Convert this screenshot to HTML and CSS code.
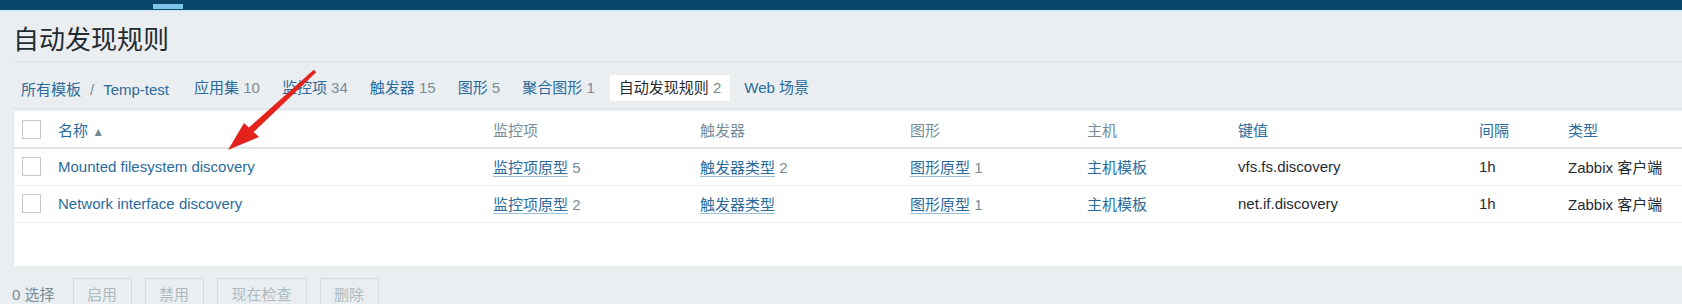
FILE: index.html
```html
<!DOCTYPE html>
<html lang="zh-CN">
<head>
<meta charset="utf-8">
<title>自动发现规则</title>
<link rel="stylesheet" href="styles.css">
</head>
<body>
<div class="topbar"><span class="topbar-tab"></span></div>
<div class="page">
  <header class="header">
    <h1 class="title">自动发现规则</h1>
  </header>
  <nav class="tabs">
    <span class="crumb"><a class="link">所有模板</a><span class="sep">/</span><a class="link">Temp-test</a></span>
    <span class="tab"><a class="link">应用集</a> <span class="count">10</span></span>
    <span class="tab"><a class="link">监控项</a> <span class="count">34</span></span>
    <span class="tab"><a class="link">触发器</a> <span class="count">15</span></span>
    <span class="tab"><a class="link">图形</a> <span class="count">5</span></span>
    <span class="tab"><a class="link">聚合图形</a> <span class="count">1</span></span>
    <span class="tab tab-active"><span class="current">自动发现规则</span> <span class="count">2</span></span>
    <span class="tab"><a class="link">Web 场景</a></span>
  </nav>
  <section class="list">
    <table class="grid">
      <colgroup>
        <col class="c-check"><col class="c-name"><col class="c-items"><col class="c-trig"><col class="c-graph"><col class="c-host"><col class="c-key"><col class="c-int"><col class="c-type">
      </colgroup>
      <thead>
        <tr>
          <th><span class="box"></span></th>
          <th><a class="link">名称</a> <span class="sort">▲</span></th>
          <th>监控项</th>
          <th>触发器</th>
          <th>图形</th>
          <th>主机</th>
          <th><a class="link">键值</a></th>
          <th><a class="link">间隔</a></th>
          <th><a class="link">类型</a></th>
        </tr>
      </thead>
      <tbody>
        <tr>
          <td><span class="box"></span></td>
          <td><a class="link">Mounted filesystem discovery</a></td>
          <td><a class="link u">监控项原型</a> <span class="count">5</span></td>
          <td><a class="link u">触发器类型</a> <span class="count">2</span></td>
          <td><a class="link u">图形原型</a> <span class="count">1</span></td>
          <td><a class="link">主机模板</a></td>
          <td>vfs.fs.discovery</td>
          <td>1h</td>
          <td>Zabbix 客户端</td>
        </tr>
        <tr>
          <td><span class="box"></span></td>
          <td><a class="link">Network interface discovery</a></td>
          <td><a class="link u">监控项原型</a> <span class="count">2</span></td>
          <td><a class="link u">触发器类型</a></td>
          <td><a class="link u">图形原型</a> <span class="count">1</span></td>
          <td><a class="link">主机模板</a></td>
          <td>net.if.discovery</td>
          <td>1h</td>
          <td>Zabbix 客户端</td>
        </tr>
      </tbody>
    </table>
  </section>
  <div class="actions">
    <span class="selected">0 选择</span>
    <button class="btn w-59">启用</button>
    <button class="btn w-59">禁用</button>
    <button class="btn w-90">现在检查</button>
    <button class="btn w-59">删除</button>
  </div>
</div>
<svg class="annot" width="1682" height="304" viewBox="0 0 1682 304">
  <path d="M313.8 69.8 L316.2 72.2 L253.4 132.3 L248.6 127.7 Z" fill="#e3231c"/>
  <path d="M228 150 L244 123 L259 137 Z" fill="#e3231c"/>
</svg>
</body>
</html>
```

FILE: styles.css
```css
* { box-sizing: border-box; }
html, body { margin: 0; padding: 0; }
body {
  width: 1682px;
  height: 304px;
  overflow: hidden;
  background: #ebeef0;
  font-family: "Liberation Sans", Arial, "Noto Sans CJK SC", sans-serif;
  font-size: 15px;
  color: #1f2c33;
  position: relative;
}
.topbar {
  height: 12px;
  background: #0a466a;
  border-bottom: 2px solid #d8edf7;
  position: relative;
}
.topbar-tab {
  position: absolute;
  left: 153px;
  top: 4px;
  width: 30px;
  height: 5px;
  background: #7fc4ea;
}
.page { padding-left: 13px; }
.header {
  height: 50px;
  padding-top: 7px;
  border-bottom: 1px solid #dde3e7;
  display: flex;
  align-items: center;
}
.title {
  margin: 0;
  font-size: 26px;
  font-weight: normal;
  color: #1f2c33;
  line-height: 30px;
}
.tabs {
  height: 47px;
  padding-top: 6px;
  display: flex;
  align-items: center;
  border-bottom: 1px solid #dde3e7;
  padding-left: 1px;
}
.link { color: #2a6b9c; text-decoration: none; }
.link.u { border-bottom: 1px solid #9cbfd8; }
.count { color: #768d99; }
.crumb { padding: 0 7px; margin-right: 11px; }
.sep { color: #768d99; margin: 0 9px; }
.tab { padding: 0 7px; height: 26px; line-height: 26px; margin-right: 8px; }
.tab-active { background: #fff; padding: 0 9px; margin-right: 7px; }
.current { color: #1f2c33; }
.list {
  margin-top: 2px;
  background: #fff;
  border-left: 1px solid #dfe4e7;
  height: 155px;
  overflow: hidden;
}
.grid {
  border-collapse: collapse;
  table-layout: fixed;
  width: 1720px;
}
.c-check { width: 36px; }
.c-name { width: 435px; }
.c-items { width: 207px; }
.c-trig { width: 210px; }
.c-graph { width: 177px; }
.c-host { width: 151px; }
.c-key { width: 241px; }
.c-int { width: 89px; }
.c-type { width: 174px; }
.grid th, .grid td {
  text-align: left;
  font-weight: normal;
  padding: 0 8px;
  height: 37px;
  white-space: nowrap;
  vertical-align: middle;
}
.grid th { color: #768d99; border-bottom: 2px solid #dce2e6; }
.grid td { border-bottom: 1px solid #ebeef0; }
.box {
  display: block;
  width: 19px;
  height: 19px;
  border: 1px solid #bfc8cd;
  background: #fff;
}
.sort { color: #6c8a8c; font-size: 12px; }
.actions {
  display: flex;
  align-items: center;
  margin-top: 13px;
  height: 28px;
  margin-left: -1px;
}
.selected { color: #768d99; margin-right: 18px; }
.btn {
  height: 30px;
  border: 1px solid #d4dbdf;
  background: #ebeef0;
  color: #acbbc2;
  font-family: inherit;
  font-size: 15px;
  margin-right: 13px;
  padding: 0;
}
.w-59 { width: 59px; }
.w-90 { width: 90px; }
.annot { position: absolute; left: 0; top: 0; pointer-events: none; }
```
